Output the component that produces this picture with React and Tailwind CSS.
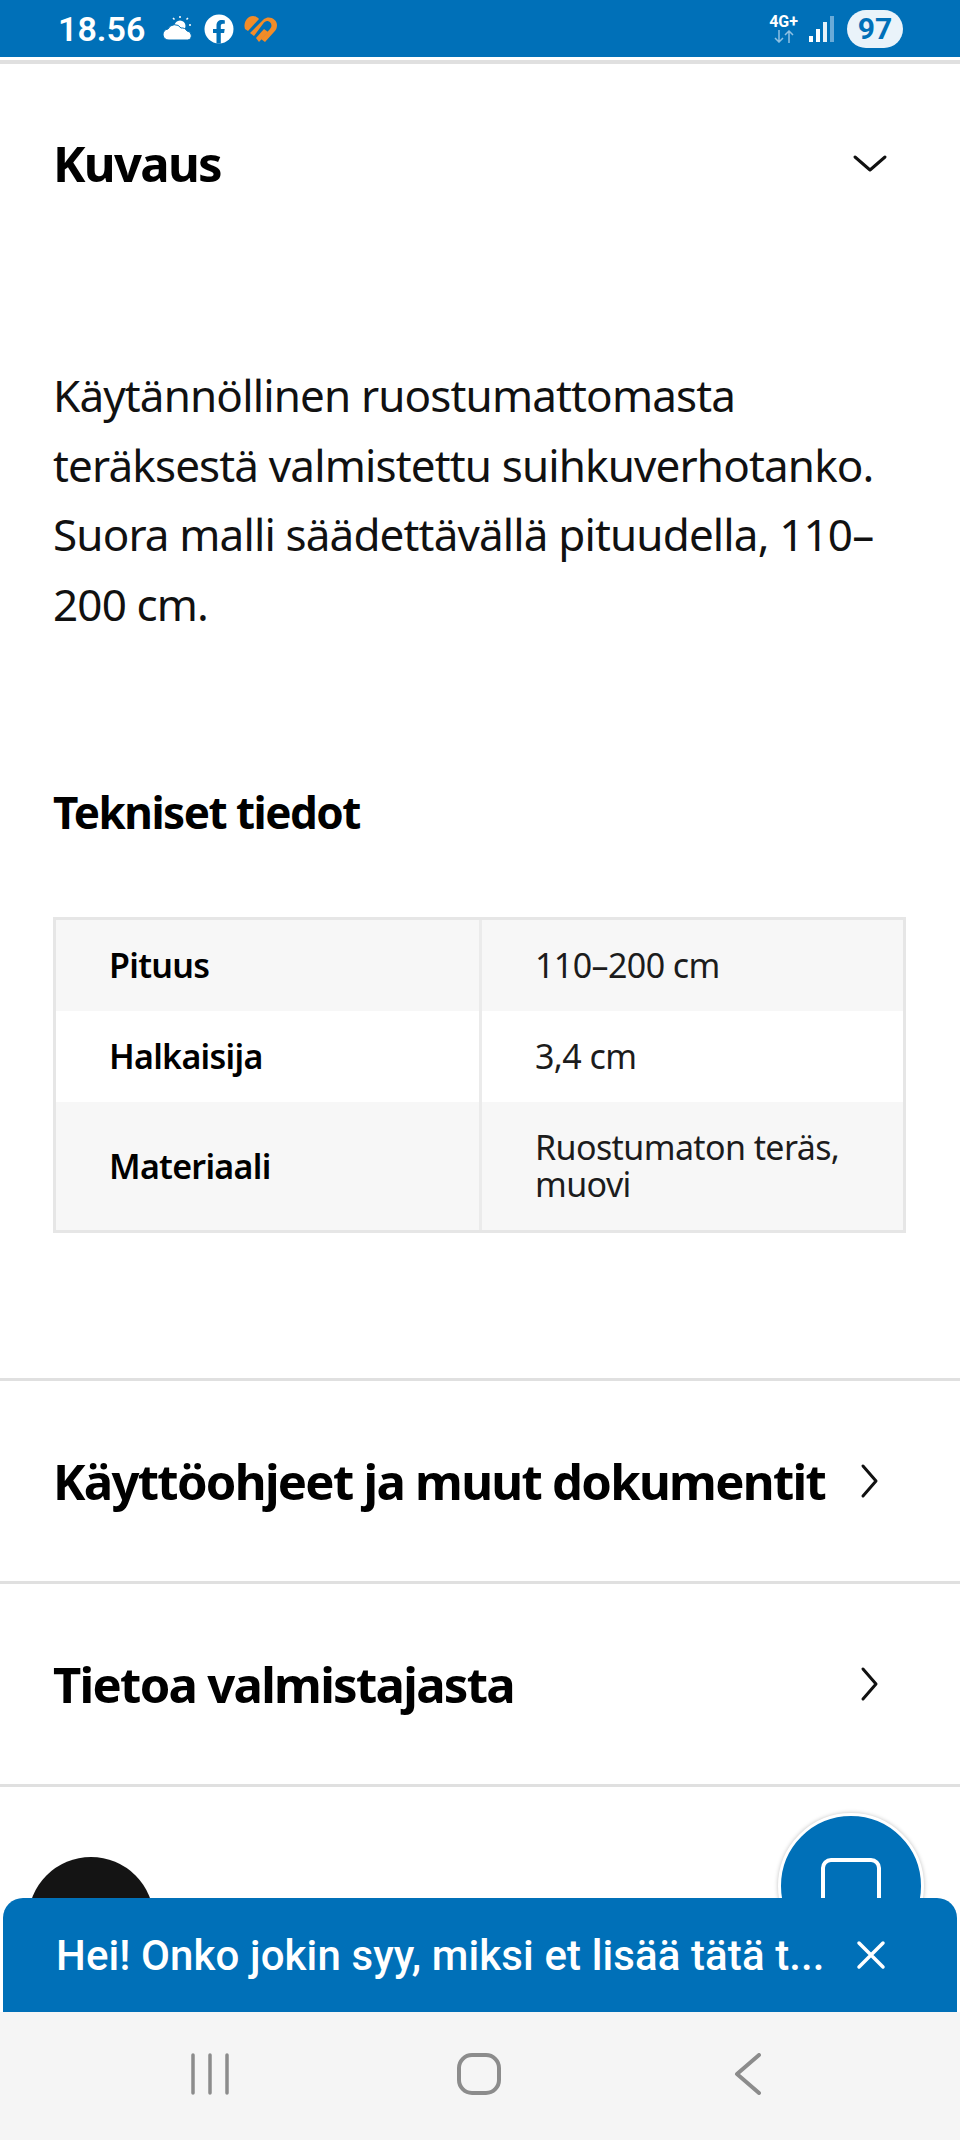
const font = { fontFamily: '"Noto Sans", sans-serif' };

function Chevron({ dir }) {
  return (
    <svg width="40" height="40" viewBox="0 0 40 40" fill="none" stroke="#111" strokeWidth="3" strokeLinecap="round" strokeLinejoin="round">
      {dir === "down" ? <path d="M5 14 L20 27 L35 14" /> : <path d="M13 5 L26 20 L13 35" />}
    </svg>
  );
}

function StatusBar() {
  return (
    <div className="h-[57px] bg-[#0070b8] flex items-center justify-between pl-[58px] pr-[57px] text-white shrink-0">
      <div className="flex items-center">
        <span className="text-[34px] font-semibold font-['Roboto',sans-serif] leading-none">18.56</span>
        <svg className="ml-[17px]" width="31" height="27" viewBox="0 0 31 27" fill="white">
          <circle cx="18" cy="11" r="5.500" />
          <path d="M7 25 a5.500 5.500 0 0 1 -1 -11 a7.500 7.500 0 0 1 13 -1 a6 6 0 0 1 6 3 a4.600 4.600 0 0 1 1 9 z" stroke="#0070b8" strokeWidth="1" />
          <path d="M18 1v2M26 3l-1.500 1.500M29 10h-2M11 3l1.500 1.500" stroke="white" strokeWidth="1.500" />
        </svg>
        <svg className="ml-[11px]" width="30" height="30" viewBox="0 0 30 30">
          <circle cx="15" cy="15" r="14.500" fill="white" />
          <path d="M12.500 29.500 V19 H9 v-4 h3.500 v-3.500 c0-3.500 2-5.500 5.500-5.500 1.500 0 2.800.3 2.800.3 v3.500 h-1.800 c-1.800 0-2.200 1-2.200 2.200 V15 h3.900 l-.6 4 h-3.300 v10.500 z" fill="#0070b8" />
        </svg>
        <svg className="ml-[10px]" width="33" height="28" viewBox="0 0 33 28" fill="#f28c28">
          <path d="M1 14 C-1 8 3 1 9 1 c2 0 4 1 6 3 L4 16 z" />
          <path d="M6 18 L20 4 C25 0 33 4 33 10 c0 3-1 5-3 7 L21 27 l-4-3 L26 14 c3-3 1-8-3-8 -1 0-2 .5-3 1.500 L10 21 z" />
          <path d="M12 23 L20 14 l4 3 -9 10 z" />
        </svg>
      </div>
      <div className="flex items-center">
        <div className="flex flex-col items-center leading-none mr-[11px]">
          <span className="text-[16px] font-bold font-['Roboto',sans-serif]">4G+</span>
          <svg width="22" height="13" viewBox="0 0 22 13" fill="none" stroke="#8fc0e2" strokeWidth="1.500">
            <path d="M6 0v12M2 8l4 4 4-4M16 13V1M12 5l4-4 4 4" />
          </svg>
        </div>
        <div className="flex items-end gap-[3px] h-[26px] mr-[13px]">
          <div className="w-[4px] h-[6px] bg-white" />
          <div className="w-[4px] h-[13px] bg-white" />
          <div className="w-[4px] h-[20px] bg-white/90" />
          <div className="w-[4px] h-[26px] bg-[#6aabd8]" />
        </div>
        <div className="w-[56px] h-[38px] rounded-full bg-[#eaf3fa] text-[#0070b8] text-[30px] font-bold font-['Roboto',sans-serif] flex items-center justify-center leading-none">
          97
        </div>
      </div>
    </div>
  );
}

function SpecRow({ label, value, shaded, tall }) {
  return (
    <div className={`grid grid-cols-[426px_1fr] ${shaded ? "bg-[#f7f7f7]" : "bg-white"} ${tall ? "h-[128px]" : "h-[91px]"}`}>
      <div className="flex items-center pl-[53px] border-r-[3px] border-[#ebebeb] font-semibold text-black text-[34px] tracking-[-0.7px]">{label}</div>
      <div className="flex items-center pl-[53px] pr-[30px] text-[#1c1c1c] text-[34px] leading-[37px] tracking-[-0.6px]">{value}</div>
    </div>
  );
}

function LinkRow({ title }) {
  return (
    <div className="h-[203px] border-b-[3px] border-[#e0e0e0] flex items-center justify-between pl-[53px] pr-[70px]">
      <h2 className="text-[49px] font-bold text-black tracking-[-1.7px] leading-none whitespace-nowrap">{title}</h2>
      <Chevron dir="right" />
    </div>
  );
}

function Toast() {
  return (
    <div className="absolute left-[3px] right-[3px] bottom-0 h-[114px] bg-[#0070b8] rounded-t-[20px] flex items-center justify-between pl-[53px] pr-[71px] text-white">
      <span className="text-[42px] font-medium font-['Roboto',sans-serif] whitespace-nowrap tracking-[0.1px]">Hei! Onko jokin syy, miksi et lisää tätä t...</span>
      <svg width="30" height="30" viewBox="0 0 30 30" stroke="white" strokeWidth="3.500" strokeLinecap="round">
        <path d="M3 3 L27 27 M27 3 L3 27" />
      </svg>
    </div>
  );
}

function NavBar() {
  return (
    <div className="h-[128px] bg-[#f5f5f5] shrink-0 grid grid-cols-[269px_269px_269px] justify-items-center items-start pt-[41px] pl-[75px]">
      <svg width="40" height="42" viewBox="0 0 40 42" stroke="#8c8c8c" strokeWidth="3.500" strokeLinecap="round">
        <path d="M3 2v38M20 2v38M37 2v38" />
      </svg>
      <svg width="44" height="42" viewBox="0 0 44 42" fill="none" stroke="#8c8c8c" strokeWidth="4">
        <rect x="2" y="2" width="40" height="38" rx="13" />
      </svg>
      <svg width="30" height="42" viewBox="0 0 30 42" fill="none" stroke="#8c8c8c" strokeWidth="4" strokeLinecap="round" strokeLinejoin="round">
        <path d="M26 2 L4 21 L26 40" />
      </svg>
    </div>
  );
}

export default function App() {
  return (
    <div className="w-[960px] h-[2140px] bg-white flex flex-col overflow-hidden" style={font}>
      <StatusBar />
      <div className="h-[7px] bg-white border-b-[4px] border-[#e0e0e0] shrink-0" />

      <main className="relative flex-1 overflow-hidden">
        <div className="flex items-center justify-between pl-[53px] pr-[70px] pt-[67px]">
          <h2 className="text-[49px] font-bold text-black tracking-[-1.7px] leading-[64px]">Kuvaus</h2>
          <Chevron dir="down" />
        </div>

        <p className="mt-[166px] mx-[53px] text-[#111] text-[44px] leading-[69.500px] tracking-[-0.85px] whitespace-nowrap">
          Käytännöllinen ruostumattomasta<br />
          teräksestä valmistettu suihkuverhotanko.<br />
          Suora malli säädettävällä pituudella, 110–<br />
          200 cm.
        </p>

        <h3 className="mt-[145px] mx-[53px] text-[44px] font-bold text-black tracking-[-1.500px] leading-[56px]">Tekniset tiedot</h3>

        <div className="mt-[77px] ml-[53px] w-[853px] border-[3px] border-[#e6e6e6]">
          <SpecRow label="Pituus" value="110–200 cm" shaded />
          <SpecRow label="Halkaisija" value="3,4 cm" />
          <SpecRow label="Materiaali" value={<span>Ruostumaton teräs,<br />muovi</span>} shaded tall />
        </div>

        <div className="mt-[145px] border-t-[3px] border-[#e0e0e0]">
          <LinkRow title="Käyttöohjeet ja muut dokumentit" />
          <LinkRow title="Tietoa valmistajasta" />
        </div>

        <div className="absolute left-[28px] top-[1793px] w-[126px] h-[126px] rounded-full bg-[#141414]" />
        <div className="absolute left-[778px] top-[1749px] w-[146px] h-[146px] rounded-full bg-[#0070b8] border-[3px] border-white shadow-[0_0_4px_rgba(0,0,0,0.25)] flex justify-center pt-[42px]">
          <div className="w-[60px] h-[60px] rounded-[10px] border-[4px] border-white" />
        </div>
        <Toast />
      </main>

      <NavBar />
    </div>
  );
}
